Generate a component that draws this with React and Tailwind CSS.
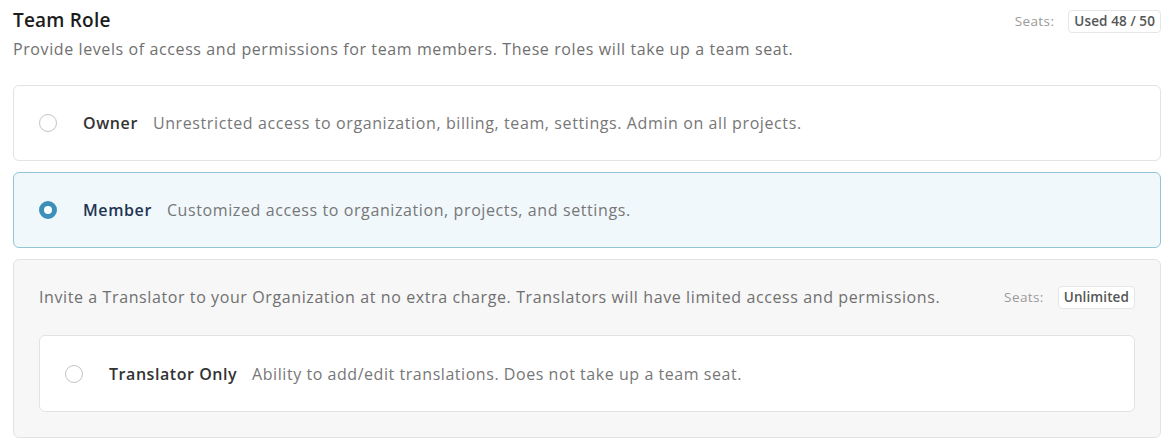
import { useState } from 'react';

const roles = [
  { id: 'owner', name: 'Owner', desc: 'Unrestricted access to organization, billing, team, settings. Admin on all projects.' },
  { id: 'member', name: 'Member', desc: 'Customized access to organization, projects, and settings.' },
];

function Radio({ checked }) {
  if (checked) {
    return <span className="w-[18px] h-[18px] rounded-full border-[5px] border-[#3b8fb8] bg-white shrink-0" />;
  }
  return <span className="w-[18px] h-[18px] rounded-full border border-[#c4c4c4] bg-white shrink-0" />;
}

function Seats({ label }) {
  return (
    <div className="flex items-center gap-[14px] text-[13.5px]">
      <span className="text-[#9a9a9a] tracking-[0.4px]">Seats:</span>
      <span className="px-[5px] h-[23px] flex items-center rounded-[4px] border border-[#e6e6e6] bg-white text-[#555] font-semibold tracking-[0.1px]">{label}</span>
    </div>
  );
}

export default function App() {
  const [role, setRole] = useState('member');

  return (
    <div className="bg-white px-[13px] pt-[8px] pb-[10px] font-['Open_Sans','Liberation_Sans',sans-serif]">
      {/* header */}
      <div className="flex items-start justify-between">
        <h1 className="text-[19px] leading-[24px] font-semibold tracking-[0.2px] text-[#1c1c1c]">Team Role</h1>
        <div className="pt-[2px]">
          <Seats label="Used 48 / 50" />
        </div>
      </div>
      <p className="mt-[5px] text-[16px] leading-[22px] tracking-[0.6px] text-[#707070]">
        Provide levels of access and permissions for team members. These roles will take up a team seat.
      </p>

      <div className="mt-[25px] flex flex-col gap-[11px]">
        {roles.map((r) => {
          const on = role === r.id;
          return (
            <div
              key={r.id}
              onClick={() => setRole(r.id)}
              className={`h-[76px] px-[25px] flex items-center gap-[26px] rounded-[6px] border cursor-pointer ${on ? 'bg-[#f0f8fc] border-[#93c4d6]' : 'bg-white border-[#e3e3e3]'}`}
            >
              <Radio checked={on} />
              <div className="text-[16px] tracking-[0.6px] flex items-baseline gap-[15px]">
                <span className={`font-semibold ${on ? 'text-[#1f3552]' : 'text-[#333]'}`}>{r.name}</span>
                <span className="text-[#777]">{r.desc}</span>
              </div>
            </div>
          );
        })}

        {/* translator group */}
        <div className="rounded-[6px] border border-[#e3e3e3] bg-[#f7f7f7] px-[25px] pt-[25px] pb-[25px]">
          <div className="flex items-center justify-between h-[24px]">
            <p className="text-[16px] tracking-[0.6px] text-[#707070]">
              Invite a Translator to your Organization at no extra charge. Translators will have limited access and permissions.
            </p>
            <Seats label="Unlimited" />
          </div>
          <div
            onClick={() => setRole('translator')}
            className={`mt-[26px] h-[77px] px-[25px] flex items-center gap-[26px] rounded-[6px] border cursor-pointer ${role === 'translator' ? 'bg-[#f0f8fc] border-[#93c4d6]' : 'bg-white border-[#e3e3e3]'}`}
          >
            <Radio checked={role === 'translator'} />
            <div className="text-[16px] tracking-[0.55px] flex items-baseline gap-[15px]">
              <span className="font-semibold text-[#333]">Translator Only</span>
              <span className="text-[#777]">Ability to add/edit translations. Does not take up a team seat.</span>
            </div>
          </div>
        </div>
      </div>
    </div>
  );
}
